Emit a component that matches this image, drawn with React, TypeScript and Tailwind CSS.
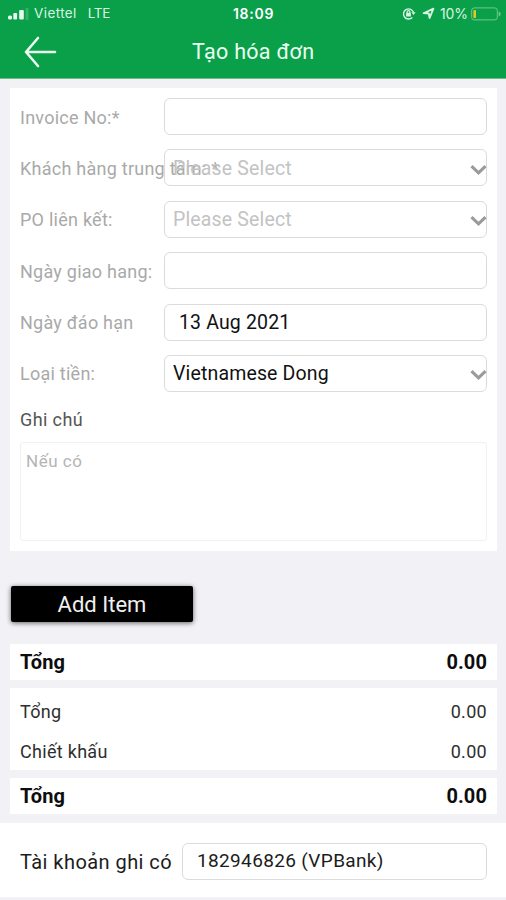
import { type FC, type ReactNode } from "react";
import clsx from "clsx";

type Field = {
  label: string;
  value?: string;
  placeholder?: string;
  select?: boolean;
  indent?: boolean;
};

const fields: Field[] = [
  { label: "Invoice No:*" },
  { label: "Khách hàng trung tâm: *", placeholder: "Please Select", select: true },
  { label: "PO liên kết:", placeholder: "Please Select", select: true },
  { label: "Ngày giao hang:" },
  { label: "Ngày đáo hạn", value: "13 Aug 2021", indent: true },
  { label: "Loại tiền:", value: "Vietnamese Dong", select: true },
];

const StatusBar: FC = () => (
  <div className="flex h-[27px] items-center font-['Inter',sans-serif] text-[13.5px] text-[#d8f5e2]">
    <div className="flex w-[233px] items-center pl-2">
      <svg width="21" height="12" viewBox="0 0 21 12" fill="#e6fbed">
        <rect x="0" y="7.5" width="4" height="4" rx="1.5" />
        <rect x="5.3" y="5" width="3.8" height="6.5" rx="1" />
        <rect x="11.2" y="2" width="4.6" height="9.5" rx="1" />
        <rect x="17.5" y="0" width="3" height="12" rx="1" opacity="0.2" />
      </svg>
      <span className="ml-[5px] tracking-[0.4px]">Viettel</span>
      <span className="ml-[11px] tracking-[-0.3px]">LTE</span>
    </div>
    <span className="text-[14px] font-semibold tracking-[0.7px] text-white">18:09</span>
    <div className="flex flex-1 items-center justify-end pr-[5px]">
      <svg width="14" height="13" viewBox="0 0 14 13" fill="none" stroke="#d8f5e2">
        <path d="M10.3 10.5A5.1 5.1 0 1 1 11.5 5.5" strokeWidth="1.4" />
        <path d="M9.4 5.2h4.2l-2.1 2.7z" fill="#d8f5e2" stroke="none" />
        <rect x="4.1" y="5.8" width="4.8" height="3.8" rx="0.6" fill="#d8f5e2" stroke="none" />
        <path d="M5.1 6V5a1.4 1.4 0 0 1 2.8 0v1" strokeWidth="1.2" />
      </svg>
      <svg className="ml-[6px]" width="13" height="13" viewBox="0 0 13 13" fill="none" stroke="#d8f5e2" strokeWidth="1.8" strokeLinejoin="round">
        <path d="M1.6 6.2 11.4 1.6 7.6 11 6.8 6.5z" />
      </svg>
      <span className="ml-[5px] text-[14px] tracking-[-0.1px]">10%</span>
      <svg className="ml-[3px]" width="30" height="14" viewBox="0 0 30 14" fill="none">
        <rect x="0.7" y="0.9" width="25.6" height="12" rx="2.5" stroke="#6fca91" />
        <path d="M27.7 4.6q2 .6 2 2.4t-2 2.4z" fill="#6fca91" />
        <rect x="2.4" y="3" width="2.6" height="8" rx="0.8" fill="#e5c722" />
      </svg>
    </div>
  </div>
);

const Chevron: FC = () => (
  <svg className="mt-[3px] -mr-px ml-auto" width="17" height="12" viewBox="0 0 17 12" fill="none" stroke="#9b9b9b" strokeWidth="3.2">
    <path d="M1.5 2.2 8.5 8.8 15.5 2.2" />
  </svg>
);

const FieldRow: FC<Field> = ({ label, value, placeholder, select, indent }) => (
  <div className="flex h-[37px] items-center">
    <span className="w-[144px] shrink-0 pt-px text-[18px] tracking-[0.25px] whitespace-nowrap text-[#a9a9a9]">
      {label}
    </span>
    <div
      className={clsx(
        "flex h-full flex-1 items-center rounded-[6px] border-[1.5px] border-[#dbdbdb] pt-px text-[19.5px] tracking-[0.15px]",
        indent ? "pl-[14px]" : "pl-[8px]",
      )}
    >
      {placeholder ? <span className="text-[#c3c3c3]">{placeholder}</span> : null}
      {value ? <span className="text-[#111]">{value}</span> : null}
      {select ? <Chevron /> : null}
    </div>
  </div>
);

const TotalCard: FC<{ children: ReactNode }> = ({ children }) => (
  <div className="flex h-[36px] items-center justify-between bg-white px-[10px] text-[20px] font-bold tracking-[0.1px] text-[#0d0d0d]">
    {children}
  </div>
);

const SummaryRow: FC<{ label: string; amount: string }> = ({ label, amount }) => (
  <div className="flex h-[40px] items-center justify-between text-[18px] tracking-[0.3px] text-[#2e2e2e]">
    <span>{label}</span>
    <span>{amount}</span>
  </div>
);

export default function App() {
  return (
    <div className="flex h-[900px] w-[506px] flex-col overflow-hidden bg-[#f1f1f6] font-['Roboto',sans-serif]">
      <header className="h-[79px] shrink-0 border-b border-[#6fb88c] bg-[#0a9f49]">
        <StatusBar />
        <div className="flex h-[50px] items-center">
          <div className="w-[192px] pl-[24px]">
            <svg width="33" height="32" viewBox="0 0 33 32" fill="none" stroke="#e9fdf0" strokeWidth="2.6" strokeLinecap="round" strokeLinejoin="round">
              <path d="M14 2 2 16 14 30M2 16H31" />
            </svg>
          </div>
          <h1 className="text-[21.5px] tracking-[0.3px] text-[#eafff2]">Tạo hóa đơn</h1>
        </div>
      </header>

      <main className="flex flex-col pt-[9px] pr-[9px] pl-[10px]">
        <section className="h-[463px] bg-white px-[10px] pt-[10px]">
          <div className="flex flex-col gap-[14.4px]">
            {fields.map((field) => (
              <FieldRow key={field.label} {...field} />
            ))}
          </div>
          <div className="mt-[15px] text-[18px] leading-[26px] tracking-[0.4px] text-[#555]">Ghi chú</div>
          <div className="mt-[9px] h-[99px] rounded-[3px] border border-[#f1f1f1] px-[5px] pt-[6px] text-[17px] tracking-[0.5px] text-[#b5b5b5]">
            Nếu có
          </div>
        </section>

        <button className="mt-[35px] ml-[1px] h-[36px] w-[182px] rounded-[2px] bg-black text-[22px] text-[#efefef] shadow-[0_1px_5px_rgba(0,0,0,0.6)]">
          Add Item
        </button>

        <div className="mt-[22px] flex flex-col gap-[8px]">
          <TotalCard>
            <span>Tổng</span>
            <span>0.00</span>
          </TotalCard>
          <div className="h-[82px] bg-white px-[10px] pt-[3px]">
            <SummaryRow label="Tổng" amount="0.00" />
            <SummaryRow label="Chiết khấu" amount="0.00" />
          </div>
          <TotalCard>
            <span>Tổng</span>
            <span>0.00</span>
          </TotalCard>
        </div>
      </main>

      <footer className="mt-[9px] flex h-[75px] items-center border-b border-[#f3f3f3] bg-white pt-[2px] pr-[19px] pl-[20px]">
        <span className="w-[162px] shrink-0 pt-px text-[20px] tracking-[0.45px] whitespace-nowrap text-[#1c1c1c]">Tài khoản ghi có</span>
        <div className="flex h-[37px] flex-1 items-center rounded-[6px] border-[1.5px] border-[#dbdbdb] pl-[14px] text-[19px] tracking-[0.35px] text-[#1c1c1c]">
          182946826 (VPBank)
        </div>
      </footer>
    </div>
  );
}
